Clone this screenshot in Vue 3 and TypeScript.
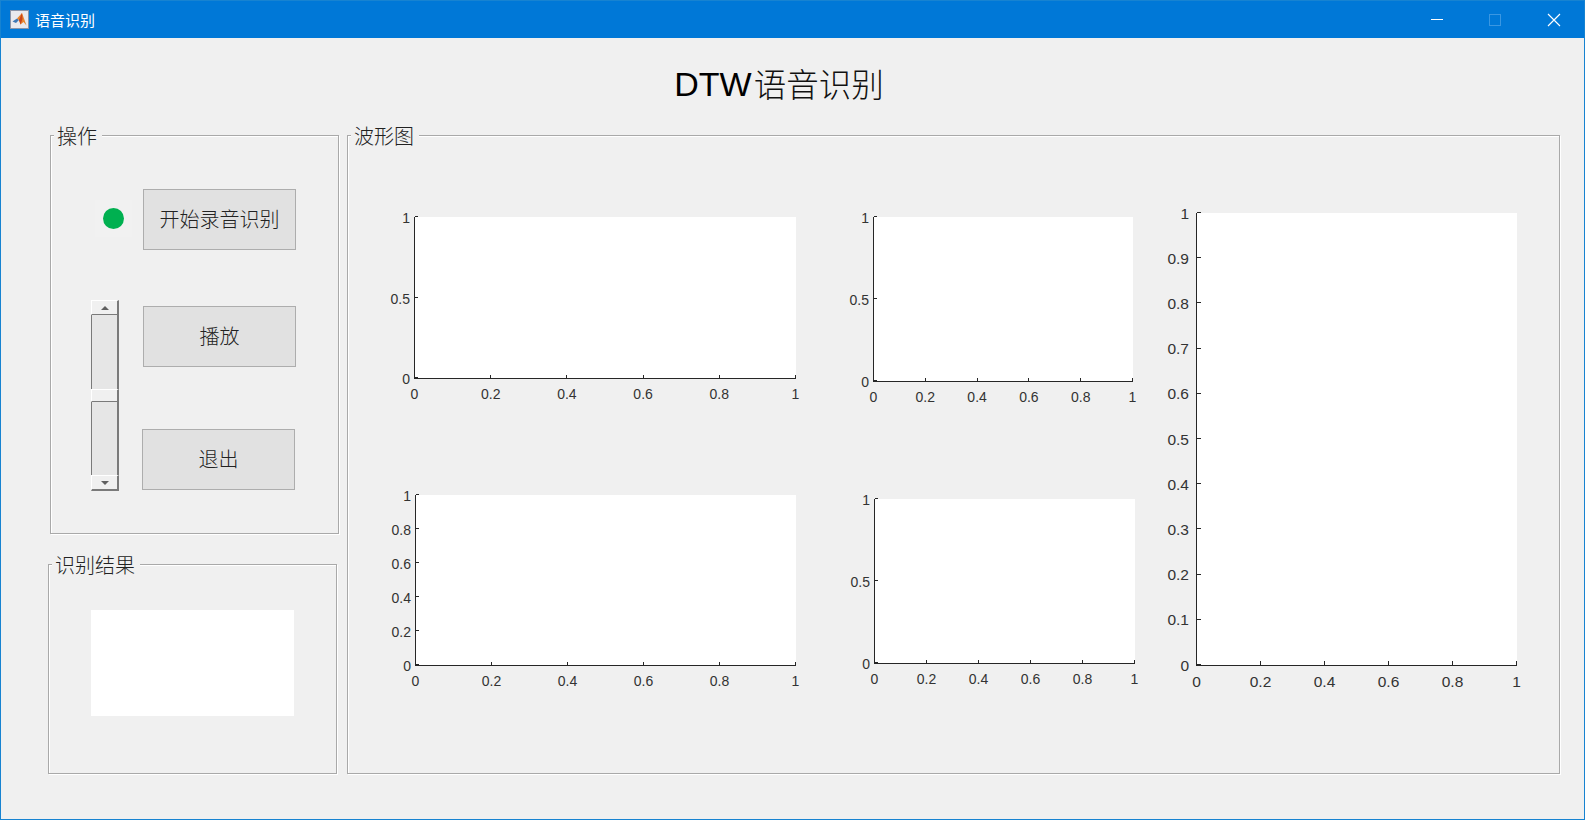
<script setup lang="ts">
interface AxesSpec {
  name: string
  big?: boolean
  y: string[]
}
const two = ['0', '0.5', '1']
const six = ['0', '0.2', '0.4', '0.6', '0.8', '1']
const eleven = ['0', '0.1', '0.2', '0.3', '0.4', '0.5', '0.6', '0.7', '0.8', '0.9', '1']
const columns: { name: string; axes: AxesSpec[] }[] = [
  { name: 'col-a', axes: [{ name: 'ax-1', y: two }, { name: 'ax-4', y: six }] },
  { name: 'col-b', axes: [{ name: 'ax-2', y: two }, { name: 'ax-5', y: two }] },
  { name: 'col-c', axes: [{ name: 'ax-3', big: true, y: eleven }] },
]
const xLabels = six
function pct(i: number, n: number): string {
  return `${(i / (n - 1)) * 100}%`
}
</script>

<template>
  <div class="window">
    <header class="titlebar">
      <svg class="app-icon" width="19" height="19" viewBox="0 0 19 19">
        <rect x="0.5" y="0.5" width="18" height="18" fill="#e9e9ee" stroke="#8a94a8" />
        <path d="M2.5 11.5 L7 8.5 L9 10 L6 13 Z" fill="#3f78b5" />
        <path d="M7 8.5 L12 3 L16.5 15.5 L13.5 12 L10.5 14.5 L9 10 Z" fill="#e8862f" />
        <path d="M12 3 L9 10 L10.5 14.5 L12.5 9 Z" fill="#c9441c" />
      </svg>
      <span class="app-title">语音识别</span>
      <div class="controls">
        <div class="ctl">
          <svg width="14" height="14" viewBox="0 0 14 14"><path d="M1 6.5 H13" stroke="#fff" fill="none" /></svg>
        </div>
        <div class="ctl">
          <svg width="14" height="14" viewBox="0 0 14 14"><rect x="1.5" y="1.5" width="11" height="11" stroke="#3a97e2" fill="none" /></svg>
        </div>
        <div class="ctl">
          <svg width="14" height="14" viewBox="0 0 14 14"><path d="M1 1 L13 13 M13 1 L1 13" stroke="#fff" stroke-width="1.15" fill="none" /></svg>
        </div>
      </div>
    </header>

    <main class="content">
      <h1 class="heading"><span class="h-latin">DTW</span><span class="h-cjk">语音识别</span></h1>

      <div class="panels">
        <div class="left-col">
          <section class="panel panel-ops">
            <div class="legend">操作</div>
            <div class="ops-left">
              <div class="led-box"><span class="led"></span></div>
              <div class="slider">
                <div class="sl-btn"><span class="arrow up"></span></div>
                <div class="sl-track"></div>
                <div class="sl-thumb"></div>
                <div class="sl-track"></div>
                <div class="sl-btn sl-last"><span class="arrow down"></span></div>
              </div>
            </div>
            <div class="ops-right">
              <button class="btn btn-start">开始录音识别</button>
              <button class="btn btn-play">播放</button>
              <button class="btn btn-exit">退出</button>
            </div>
          </section>

          <section class="panel panel-result">
            <div class="legend">识别结果</div>
            <div class="result-box"></div>
          </section>
        </div>

        <section class="panel panel-wave">
          <div class="legend">波形图</div>
          <div v-for="col in columns" :key="col.name" class="col" :class="col.name">
            <div v-for="ax in col.axes" :key="ax.name" class="plot" :class="[ax.name, { big: ax.big }]">
              <template v-for="(label, i) in ax.y" :key="'y' + i">
                <span class="ytick" :style="{ bottom: pct(i, ax.y.length) }"></span>
                <span class="ylabel" :style="{ bottom: pct(i, ax.y.length) }">{{ label }}</span>
              </template>
              <template v-for="(label, i) in xLabels" :key="'x' + i">
                <span class="xtick" :style="{ left: pct(i, xLabels.length) }"></span>
                <span class="xlabel" :style="{ left: pct(i, xLabels.length) }">{{ label }}</span>
              </template>
            </div>
          </div>
        </section>
      </div>
    </main>
  </div>
</template>

<style>
html,
body {
  margin: 0;
  padding: 0;
  overflow: hidden;
  background: #f0f0f0;
}
</style>

<style scoped>
* {
  box-sizing: border-box;
}
.window {
  width: 1585px;
  height: 820px;
  display: flex;
  flex-direction: column;
  border: 1px solid #1783d1;
  background: #f0f0f0;
  font-family: "Liberation Sans", "Noto Sans CJK SC", sans-serif;
  overflow: hidden;
}
.titlebar {
  height: 37px;
  flex: none;
  display: flex;
  align-items: center;
  background: #0078d7;
  padding: 0 1px 0 9px;
}
.app-icon {
  flex: none;
}
.app-title {
  margin-left: 6px;
  color: #fff;
  font-family: "Noto Sans CJK SC", sans-serif;
  font-size: 15px;
  line-height: 20px;
}
.controls {
  margin-left: auto;
  display: flex;
}
.ctl {
  width: 58.5px;
  height: 37px;
  display: flex;
  align-items: center;
  justify-content: center;
}
.content {
  flex: 1;
  display: flex;
  flex-direction: column;
}
.heading {
  margin: 0 0 5px;
  height: 92px;
  display: flex;
  align-items: center;
  justify-content: center;
  font-weight: 400;
  color: #000;
  padding-right: 27px;
}
.h-latin {
  font-family: "Liberation Sans", sans-serif;
  font-size: 34px;
}
.h-cjk {
  font-family: "Noto Sans CJK SC", sans-serif;
  font-size: 32.5px;
  font-weight: 300;
  margin: 0 0 3px 2px;
  color: #111;
}
.panels {
  display: flex;
  padding-left: 47px;
}
.left-col {
  width: 299px;
  flex: none;
  display: flex;
  flex-direction: column;
  gap: 30px;
}
.panel {
  position: relative;
  border: 1px solid #a9a9a9;
  box-shadow: 1px 1px 0 #fff, inset 1px 1px 0 #fff;
}
.legend {
  position: absolute;
  top: -13px;
  left: 3px;
  padding: 0 5px 0 3px;
  height: 25px;
  line-height: 25px;
  background: #f0f0f0;
  color: #222;
  font-family: "Noto Sans CJK SC", sans-serif;
  font-size: 20px;
  font-weight: 300;
  white-space: nowrap;
}
.panel-ops {
  width: 289px;
  height: 399px;
  margin-left: 2px;
  display: flex;
  padding-left: 40px;
}
.ops-left {
  width: 52px;
  flex: none;
  padding-top: 64px;
}
.led-box {
  width: 37px;
  height: 37px;
  margin-left: 4px;
  display: flex;
  align-items: center;
  justify-content: center;
  background: #f1f1f1;
}
.led {
  width: 21px;
  height: 21px;
  border-radius: 50%;
  background: #00b050;
}
.slider {
  width: 28px;
  height: 191px;
  margin-top: 63px;
  display: flex;
  flex-direction: column;
}
.sl-btn,
.sl-thumb {
  background: #f0f0f0;
  border-top: 1px solid #fff;
  border-left: 1px solid #fff;
  border-right: 2px solid #7a7a7a;
  border-bottom: 1px solid #7a7a7a;
  display: flex;
  align-items: center;
  justify-content: center;
}
.sl-btn {
  height: 15px;
  flex: none;
}
.sl-last {
  height: 16px;
  border-bottom-width: 2px;
}
.sl-thumb {
  height: 13px;
  flex: none;
}
.sl-track {
  flex: 1;
  background: #e6e6e6;
  border-left: 1px solid #7a7a7a;
  border-right: 2px solid #7a7a7a;
}
.arrow {
  width: 0;
  height: 0;
  border-left: 4px solid transparent;
  border-right: 4px solid transparent;
}
.arrow.up {
  border-bottom: 4px solid #606060;
}
.arrow.down {
  border-top: 4px solid #606060;
}
.ops-right {
  padding-top: 53px;
  display: flex;
  flex-direction: column;
  align-items: flex-start;
}
.btn {
  width: 153px;
  height: 61px;
  padding: 0 0 3px;
  background: #e1e1e1;
  border: 1px solid #adadad;
  border-radius: 0;
  color: #222;
  font-family: "Noto Sans CJK SC", sans-serif;
  font-size: 20px;
  font-weight: 300;
}
.btn-play {
  margin-top: 56px;
}
.btn-exit {
  margin-top: 62px;
  margin-left: -1px;
}
.panel-result {
  width: 289px;
  height: 210px;
  padding: 45px 0 0 42px;
}
.result-box {
  width: 203px;
  height: 106px;
  background: #fff;
}
.panel-wave {
  width: 1213px;
  height: 639px;
  flex: none;
  display: flex;
  padding-left: 66px;
}
.col {
  flex: none;
  display: flex;
  flex-direction: column;
  align-items: flex-start;
}
.col-a {
  width: 459px;
  padding-top: 81px;
  gap: 116px;
}
.col-b {
  width: 323px;
  padding-top: 81px;
  gap: 117px;
}
.col-c {
  padding-top: 77px;
}
.plot {
  position: relative;
  flex: none;
  background: #fff;
  border-left: 1px solid #262626;
  border-bottom: 1px solid #262626;
  font-size: 14px;
  color: #333;
  line-height: 1;
}
.ax-1 { width: 382px; height: 162px; }
.ax-4 { width: 381px; height: 171px; margin-left: 1px; }
.ax-2 { width: 260px; height: 165px; }
.ax-5 { width: 261px; height: 165px; margin-left: 1px; }
.ax-3 { width: 321px; height: 453px; font-size: 15.5px; }
.ytick {
  position: absolute;
  left: 0;
  width: 3px;
  height: 1px;
  background: #262626;
}
.xtick {
  position: absolute;
  bottom: 0;
  width: 1px;
  height: 3px;
  margin-left: -1px;
  background: #262626;
}
.big .ytick { width: 4px; }
.big .xtick { height: 4px; }
.ylabel {
  position: absolute;
  right: calc(100% + 5px);
  transform: translateY(calc(50% + 1px));
  white-space: nowrap;
}
.xlabel {
  position: absolute;
  top: calc(100% + 9px);
  transform: translateX(calc(-50% - 0.5px));
  white-space: nowrap;
}
.big .ylabel {
  right: calc(100% + 8px);
  transform: translateY(50%);
}
.big .xlabel { top: calc(100% + 9px); }
</style>
